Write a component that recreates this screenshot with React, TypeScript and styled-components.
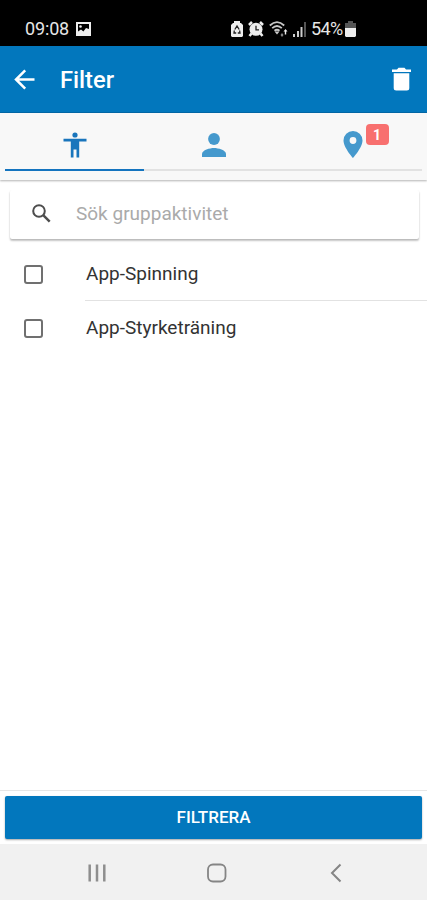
import React from "react";
import styled, { createGlobalStyle } from "styled-components";

const GlobalStyle = createGlobalStyle`
  * { box-sizing: border-box; }
  body { margin: 0; background: #fff; }
`;

const Screen = styled.div`
  width: 427px;
  height: 900px;
  display: flex;
  flex-direction: column;
  overflow: hidden;
  background: #fff;
  color: #333;
  font-family: Roboto, "Liberation Sans", sans-serif;
  svg { display: block; flex: none; }
`;

const StatusBar = styled.div`
  height: 46px;
  flex: none;
  display: flex;
  justify-content: space-between;
  padding: 11px 71px 0 25px;
  background: #000;
  color: #e6e6e6;
  font-size: 18px;
  line-height: 36px;
`;

const StatusGroup = styled.div<{ $gap: number }>`
  height: 36px;
  display: flex;
  align-items: center;
  gap: ${(p) => p.$gap}px;
`;

const Clock = styled.span`
  width: 45px;
  letter-spacing: -0.15px;
`;

const Percent = styled.span`
  width: 33px;
  letter-spacing: -0.6px;
`;

const Header = styled.header`
  height: 67px;
  flex: none;
  display: flex;
  align-items: center;
  padding: 0 13px 0 12px;
  background: #0277bd;
  border-bottom: 1px solid #0369a8;
  color: #fff;
`;

const Title = styled.h1`
  flex: 1;
  margin: 0 0 0 23px;
  padding-top: 2px;
  font-size: 23.7px;
  line-height: 28px;
  font-weight: 500;
`;

const IconButton = styled.button`
  display: flex;
  padding: 0;
  border: 0;
  background: none;
  color: inherit;
`;

const Tabs = styled.nav`
  height: 67px;
  flex: none;
  display: flex;
  padding: 0 5px;
  background: #f8f8f8;
  box-shadow: 0 1px 2px rgba(0, 0, 0, 0.3);
`;

const Tab = styled.div<{ $active?: boolean }>`
  flex: 1;
  height: 58px;
  display: flex;
  align-items: center;
  justify-content: center;
  padding-top: 7px;
  color: ${(p) => (p.$active ? "#1975bc" : "#4599cd")};
  border-bottom: 2px solid ${(p) => (p.$active ? "#1474bf" : "#e2e2e2")};
`;

const BadgeAnchor = styled.div`
  position: relative;
`;

const Badge = styled.span`
  position: absolute;
  left: 23px;
  top: -7px;
  width: 23px;
  height: 21px;
  border-radius: 4px;
  background: #f8706f;
  color: #fff;
  font-size: 14px;
  font-weight: 700;
  line-height: 22px;
  text-align: center;
`;

const SearchCard = styled.div`
  height: 49px;
  flex: none;
  display: flex;
  align-items: center;
  gap: 25px;
  margin: 10px 8px 0 10px;
  padding: 0 0 2px 22px;
  border-radius: 2px;
  background: #fff;
  box-shadow: 0 2px 2px rgba(0, 0, 0, 0.2), 0 1px 2px rgba(0, 0, 0, 0.12);
  clip-path: inset(0 -4px -6px -4px);
  color: #4d4d4d;
`;

const SearchInput = styled.input`
  width: 300px;
  padding: 0;
  border: 0;
  outline: 0;
  background: transparent;
  font: 19px/24px Roboto, "Liberation Sans", sans-serif;
  &::placeholder { color: #aaa; opacity: 1; }
`;

const List = styled.main`
  flex: 1;
  padding-top: 8px;
`;

const Row = styled.label`
  height: 54px;
  display: flex;
  align-items: center;
  padding-left: 24px;
`;

const Checkbox = styled.span`
  width: 19px;
  height: 19px;
  margin-right: 42px;
  border: 2px solid #707070;
  border-radius: 3px;
`;

const RowLabel = styled.span<{ $divided?: boolean }>`
  flex: 1;
  height: 54px;
  padding-left: 1px;
  border-bottom: 1px solid ${(p) => (p.$divided ? "#e2e2e2" : "transparent")};
  font-size: 19px;
  line-height: 54px;
`;

const Footer = styled.footer`
  height: 54px;
  flex: none;
  padding: 5px 5px 0;
  border-top: 1px solid #e6e6e6;
`;

const FilterButton = styled.button`
  width: 100%;
  height: 43px;
  display: block;
  padding: 0;
  border: 0;
  border-radius: 2px;
  background: #0277bd;
  box-shadow: 0 1px 2px rgba(0, 0, 0, 0.35);
  color: #fff;
  font: 500 17px/43px Roboto, "Liberation Sans", sans-serif;
`;

const SystemNav = styled.div`
  height: 56px;
  flex: none;
  display: flex;
  justify-content: space-between;
  padding: 19px 81px 0 87px;
  background: #f1f1f1;
`;

const items = ["App-Spinning", "App-Styrketräning"];

function StatusIcons() {
  return (
    <>
      <svg width="12" height="16" viewBox="0 0 12 16">
        <path d="M3 0h6v2h1l2 2v11l-1 1H1l-1-1V4l2-2h1z" fill="#eee" />
        <path d="M3.8 8.5 6 5l2.2 3.5M3.3 9.5 3 12h2.2m1.6 0H9l-.4-2.5" fill="none" stroke="#222" strokeWidth="1.3" />
      </svg>
      <svg width="16" height="16" viewBox="0 0 16 16">
        <path d="m1 4 3-3m8 0 3 3M3.5 12.5 1.5 15m11-2.5 2 2.5" stroke="#eee" strokeWidth="2.6" />
        <circle cx="8" cy="8.3" r="6.5" fill="#eee" />
        <path d="M8 4.8v4h3" fill="none" stroke="#222" strokeWidth="1.3" />
      </svg>
      <svg width="19" height="16" viewBox="0 0 19 16">
        <g fill="none" stroke="#c8c8c8" strokeWidth="1.8">
          <path d="M.8 4.5q7.2-6.8 14.4 0M3.2 7.2q4.8-4.5 9.6 0M5.5 9.8q2.5-2.2 5 0" />
        </g>
        <path d="M5.5 10.5h5L8 13.5z" fill="#ccc" />
        <path d="m13 12 1.5 2L13 16l-1.5-2z" fill="#888" />
        <path d="m16.5 8 2 2.5h-1.3v3h-1.4v-3h-1.3z" fill="#eee" />
      </svg>
      <svg width="13" height="15" viewBox="0 0 13 15">
        <path d="M0 12h2v3H0zM4 9h2v6H4zM7.5 5h2v10h-2z" fill="#ccc" />
        <path d="M11 0h2v15h-2z" fill="#555" />
      </svg>
    </>
  );
}

export default function App() {
  return (
    <>
      <GlobalStyle />
      <Screen>
        <StatusBar>
          <StatusGroup $gap={6}>
            <Clock>09:08</Clock>
            <svg width="15" height="14" viewBox="0 0 15 14">
              <path fillRule="evenodd" d="M0 0h15v14H0zM2 2v7.5l3-2 2.4 2L10 6l3 1V2z" fill="#eee" />
              <circle cx="4.5" cy="4.5" r="1.3" fill="#eee" />
            </svg>
          </StatusGroup>
          <StatusGroup $gap={5}>
            <StatusIcons />
            <StatusGroup $gap={1}>
              <Percent>54%</Percent>
              <svg width="11" height="16" viewBox="0 0 11 16">
                <path d="M3 0h5v2h3v5H0V2h3z" fill="#555" />
                <path d="M0 7h11v8l-1 1H1l-1-1z" fill="#eee" />
              </svg>
            </StatusGroup>
          </StatusGroup>
        </StatusBar>

        <Header>
          <IconButton aria-label="Tillbaka">
            <svg width="25" height="25" viewBox="0 0 25 25" fill="none" stroke="#fff" strokeWidth="2.5">
              <path d="M22.5 12.5H4m9.2-9.2L4 12.5l9.2 9.2" />
            </svg>
          </IconButton>
          <Title>Filter</Title>
          <IconButton aria-label="Rensa">
            <svg width="25" height="25" viewBox="0 0 25 25" fill="#fff">
              <path d="M3 2.5h5L9.5.8h6L17 2.5h5V5H3zM4.7 6.3h15.6V21q0 2.5-2.5 2.5H7.2q-2.5 0-2.5-2.5z" />
            </svg>
          </IconButton>
        </Header>

        <Tabs>
          <Tab $active>
            <svg width="24" height="26" viewBox="0 0 24 26" fill="currentColor">
              <circle cx="12" cy="3" r="2.6" />
              <path d="M.5 6.8h23v2.6h-7.3v16h-2.7v-7.8h-3v7.8H7.8v-16H.5z" />
            </svg>
          </Tab>
          <Tab>
            <svg width="24" height="24" viewBox="0 0 24 24" fill="currentColor">
              <circle cx="12" cy="6" r="5.9" />
              <path d="M0 24v-3c0-4 8-6 12-6s12 2 12 6v3z" />
            </svg>
          </Tab>
          <Tab>
            <BadgeAnchor>
              <svg width="20" height="27" viewBox="0 0 20 27" fill="currentColor">
                <path fillRule="evenodd" d="M10 0A9.5 9.5 0 0 0 .5 9.5C.5 16.5 10 27 10 27s9.5-10.5 9.5-17.5A9.5 9.5 0 0 0 10 0m0 6.1a3.4 3.4 0 1 1 0 6.8 3.4 3.4 0 0 1 0-6.8" />
              </svg>
              <Badge>1</Badge>
            </BadgeAnchor>
          </Tab>
        </Tabs>

        <SearchCard>
          <svg width="19" height="19" viewBox="0 0 19 19" fill="none" stroke="currentColor">
            <circle cx="7" cy="7" r="5.8" strokeWidth="2" />
            <path d="m11.2 11.2 6.5 6.5" strokeWidth="2.5" />
          </svg>
          <SearchInput placeholder="Sök gruppaktivitet" />
        </SearchCard>

        <List>
          {items.map((item, i) => (
            <Row key={item}>
              <Checkbox />
              <RowLabel $divided={i < items.length - 1}>{item}</RowLabel>
            </Row>
          ))}
        </List>

        <Footer>
          <FilterButton>FILTRERA</FilterButton>
        </Footer>

        <SystemNav>
          <svg width="20" height="20" viewBox="0 0 20 20">
            <path d="M2.7 1.5v17M10 1.5v17M17.3 1.5v17" stroke="#8e8e8e" strokeWidth="2.5" />
          </svg>
          <svg width="20" height="20" viewBox="0 0 20 20">
            <rect x="1" y="1.5" width="17.5" height="17" rx="5" fill="none" stroke="#858585" strokeWidth="1.8" />
          </svg>
          <svg width="20" height="20" viewBox="0 0 20 20">
            <path d="M14.5 1.5 6 10l8.5 8.5" fill="none" stroke="#858585" strokeWidth="2" />
          </svg>
        </SystemNav>
      </Screen>
    </>
  );
}
